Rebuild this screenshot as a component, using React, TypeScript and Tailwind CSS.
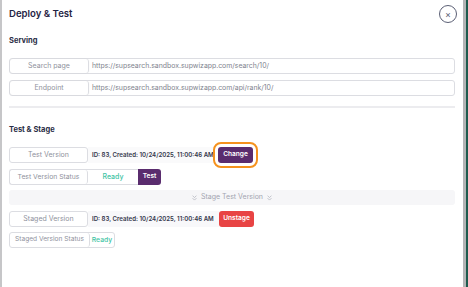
import React from "react";

const F = { fontFamily: "Inter, 'Noto Sans', sans-serif" };

function Chevs() {
  return (
    <svg width="5" height="6" viewBox="0 0 6 7" fill="none" stroke="#b0b2bc" strokeWidth="0.9" strokeLinecap="round" strokeLinejoin="round">
      <path d="M1 1 L3 3 L5 1" />
      <path d="M1 4 L3 6 L5 4" />
    </svg>
  );
}

function UrlRow({ label, url, mt }: { label: string; url: string; mt: string }) {
  return (
    <div className={`flex h-[16px] ${mt} rounded-[3px] border border-[#dcdde2]`}>
      <div className="w-[79px] shrink-0 flex items-center justify-center rounded-[3px] border-r border-[#dcdde2] text-[7px] text-[#8f929d] shadow-[0_0_1px_rgba(0,0,0,0.12)]">
        {label}
      </div>
      <div className="flex items-center pl-[3px] text-[6.9px] text-[#80838e]">{url}</div>
    </div>
  );
}

export default function App() {
  return (
    <div className="flex w-[468px] h-[287px] bg-white overflow-hidden" style={F}>
      <div className="w-[2px] shrink-0 bg-[#c6c6c8]" />
      <div className="flex-1 flex flex-col pl-[7px] pr-[8px]">
        <div className="flex h-[28px] items-center justify-between">
          <div className="text-[9.6px] font-semibold text-[#1f2444]">Deploy &amp; Test</div>
          <div className="mr-[-2px] w-[18px] h-[18px] rounded-full border border-[#5b5f75] flex items-center justify-center text-[9px] leading-none text-[#5b5f75]">
            ×
          </div>
        </div>
        <div className="mt-[8px] h-[10px] flex items-center text-[7.5px] font-bold text-[#2a2d45]">Serving</div>
        <UrlRow mt="mt-[12px]" label="Search page" url="https://supsearch.sandbox.supwizapp.com/search/10/" />
        <UrlRow mt="mt-[6px]" label="Endpoint" url="https://supsearch.sandbox.supwizapp.com/api/rank/10/" />
        <div className="mt-[10px] h-[2px] bg-[#ececef]" />
        <div className="mt-[17px] h-[10px] flex items-center text-[7.5px] font-bold text-[#2a2d45]">Test &amp; Stage</div>

        <div className="mt-[12px] flex h-[16px] items-center">
          <div className="w-[79px] h-full shrink-0 flex items-center justify-center rounded-[3px] border border-[#dcdde2] text-[7px] text-[#8f929d]">
            Test Version
          </div>
          <div className="h-full w-[125px] flex items-center pl-[4px] text-[6.1px] font-semibold text-[#33364a] bg-[#fafafb] whitespace-nowrap">
            ID: 83, Created: 10/24/2025, 11:00:46 AM
          </div>
          <div className="ml-[5px] h-full w-[35px] flex items-center justify-center rounded-[3px] bg-[#5a2c6e] text-white text-[6.6px] font-semibold outline-2 outline-[#f5921e] outline-offset-[3px]">
            Change
          </div>
        </div>

        <div className="mt-[6px] flex h-[16px] w-[152px]">
          <div className="flex flex-1 rounded-l-[3px] border border-r-0 border-[#dcdde2]">
            <div className="w-[78px] shrink-0 flex items-center justify-center rounded-[3px] border-r border-[#dcdde2] text-[6.8px] text-[#8f929d]">
              Test Version Status
            </div>
            <div className="flex-1 flex items-center justify-center text-[7px] font-medium text-[#3fc4a4]">Ready</div>
          </div>
          <div className="w-[23px] flex items-center justify-center rounded-r-[3px] bg-[#5a2c6e] text-white text-[6.6px] font-semibold">
            Test
          </div>
        </div>

        <div className="mt-[5px] h-[15px] rounded-[3px] bg-[#f6f6f8] flex items-center justify-center gap-[4px] text-[7px] text-[#a3a5b0]">
          <Chevs />
          <span>Stage Test Version</span>
          <Chevs />
        </div>

        <div className="mt-[6px] flex h-[16px] items-center">
          <div className="w-[79px] h-full shrink-0 flex items-center justify-center rounded-[3px] border border-[#dcdde2] text-[7px] text-[#8f929d]">
            Staged Version
          </div>
          <div className="h-full w-[131px] flex items-center pl-[4px] text-[6.1px] font-semibold text-[#33364a] bg-[#f8f8fa] whitespace-nowrap">
            ID: 83, Created: 10/24/2025, 11:00:46 AM
          </div>
          <div className="h-full w-[35px] flex items-center justify-center rounded-[3px] bg-[#e84444] text-white text-[6.6px] font-semibold">
            Unstage
          </div>
        </div>

        <div className="mt-[5px] flex h-[16px] w-[106px] rounded-[3px] border border-[#dcdde2]">
          <div className="w-[80px] shrink-0 flex items-center justify-center rounded-[3px] border-r border-[#dcdde2] text-[6.6px] text-[#8f929d]">
            Staged Version Status
          </div>
          <div className="flex-1 flex items-center justify-center text-[6.8px] font-medium text-[#3fc4a4]">Ready</div>
        </div>
      </div>
      <div className="w-[3px] shrink-0 bg-[#b4b4b6]" />
      <div className="w-[2px] shrink-0 bg-[#1e5b4e]" />
    </div>
  );
}
